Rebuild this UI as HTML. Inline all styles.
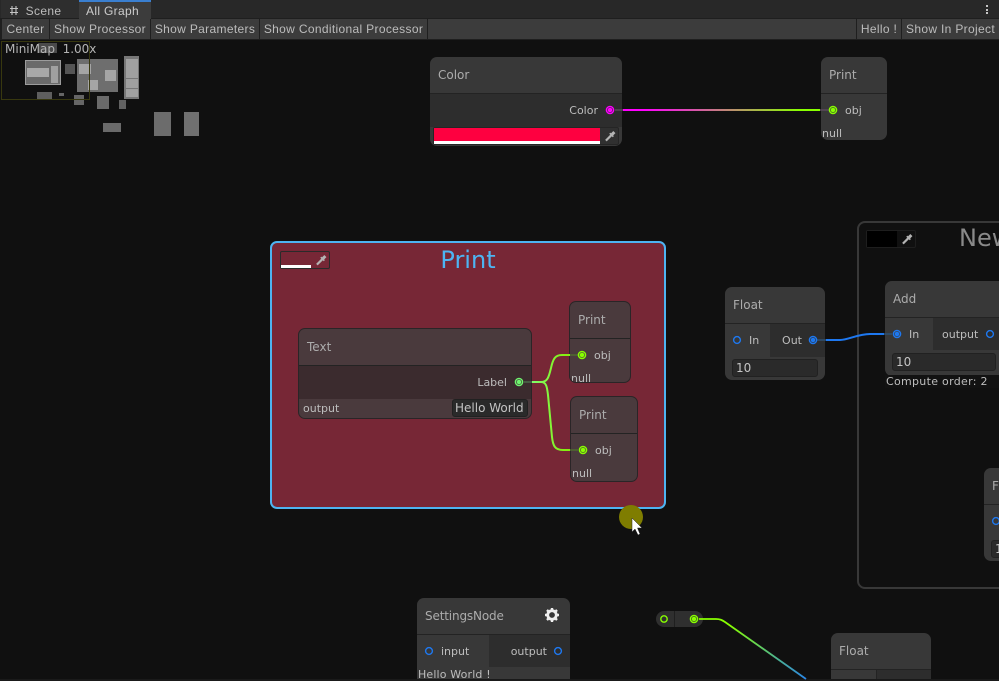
<!DOCTYPE html>
<html><head><meta charset="utf-8"><style>
html,body{margin:0;padding:0;background:#101010}
#r{position:relative;width:999px;height:681px;overflow:hidden;background:#101010;font-family:"DejaVu Sans",sans-serif;font-size:11px;color:#bdbdbd}
#r div{position:absolute;box-sizing:border-box;white-space:nowrap}
.ui{font-family:"Liberation Sans",sans-serif;font-size:12px;letter-spacing:.33px;color:#bcbcbc;line-height:20px;text-align:center}
.btn{top:19px;height:20px;line-height:21px;background:#3c3c3c}
.n{background:#383838;border-radius:7px;overflow:hidden}
.t{font-size:12px;color:#acacac;line-height:14px}
.l{line-height:13px}
.hl{height:1px;background:#232323;left:0;right:0}
.row{background:#2d2d2d;left:0;right:0;height:33px}
.inp{background:#2a2a2a;border:1px solid #212121;border-radius:3px;font-size:12px;line-height:16px;color:#c4c4c4;padding-left:3px}
svg{position:absolute;left:0;top:0}
</style></head><body><div id="r">

<div style="left:0;top:0;width:999px;height:18px;background:#282828"></div>
<div style="left:0;top:18px;width:999px;height:22px;background:#1f1f1f"></div>
<div style="left:1px;top:0;width:78px;height:18px;background:#2e2e2e"></div>
<div class="ui" style="left:25px;top:1px;width:37px;height:18px">Scene</div>
<svg width="30" height="18"><path d="M12 6V15M16 6V15M10 8.500H18M10 12.500H18" stroke="#c4c4c4" stroke-width="1.100" fill="none"/></svg>
<div style="left:79px;top:0;width:72px;height:19px;background:#3c3c3c"></div>
<div style="left:79px;top:0;width:72px;height:2px;background:#3a7fd0"></div>
<div class="ui" style="left:86px;top:1px;height:19px;color:#cccccc">All Graph</div>
<div style="left:986px;top:5px;width:2px;height:2px;background:#c4c4c4"></div>
<div style="left:986px;top:9px;width:2px;height:2px;background:#c4c4c4"></div>
<div style="left:986px;top:12px;width:2px;height:2px;background:#c4c4c4"></div>

<div class="ui btn" style="left:2px;width:47px">Center</div>
<div class="ui btn" style="left:50px;width:100px">Show Processor</div>
<div class="ui btn" style="left:151px;width:108px">Show Parameters</div>
<div class="ui btn" style="left:260px;width:167px">Show Conditional Processor</div>
<div class="btn" style="left:428px;width:428px"></div>
<div class="ui btn" style="left:857px;width:44px">Hello !</div>
<div class="ui btn" style="left:902px;width:97px">Show In Project</div>

<svg width="999" height="681">
 <g>
  <rect x="38" y="43" width="19" height="10" fill="#4a4a4a"/>
  <rect x="25.500" y="60.500" width="35" height="24" fill="#6a6a6a" stroke="#9c9c9c"/>
  <rect x="27" y="68" width="22" height="9" fill="#a8a8a8"/>
  <rect x="51" y="66" width="7" height="17" fill="#a0a0a0"/>
  <rect x="65" y="64" width="10" height="10" fill="#555"/>
  <rect x="77" y="59" width="41" height="33" fill="#6e6e6e"/>
  <rect x="79" y="64" width="12" height="10" fill="#a5a5a5"/>
  <rect x="105" y="70" width="11" height="11" fill="#a5a5a5"/>
  <rect x="88" y="80" width="10" height="10" fill="#a5a5a5"/>
  <rect x="124" y="56" width="15" height="43" fill="#777"/>
  <rect x="126" y="59" width="12" height="19" fill="#a0a0a0"/>
  <rect x="126" y="79" width="12" height="9" fill="#a0a0a0"/>
  <rect x="126" y="89" width="12" height="8" fill="#a0a0a0"/>
  <rect x="37" y="92" width="15" height="8" fill="#5e5e5e"/>
  <rect x="59" y="93" width="5" height="3" fill="#666"/>
  <rect x="74" y="95" width="10" height="10" fill="#666"/>
  <rect x="97" y="96" width="12" height="13" fill="#6a6a6a"/>
  <rect x="119" y="100" width="7" height="9" fill="#626262"/>
  <rect x="103" y="123" width="18" height="9" fill="#6a6a6a"/>
  <rect x="154" y="112" width="17" height="24" fill="#6c6c6c"/>
  <rect x="184" y="112" width="15" height="24" fill="#707070"/>
 </g>
 <rect x="1.500" y="41.500" width="88" height="58" fill="none" stroke="#38380f"/>
</svg>
<div class="l" style="left:5px;top:43px;font-size:12px;color:#b4b4b4">MiniMap&nbsp; 1.00x</div>

<!-- Color node -->
<div class="n" style="left:430px;top:57px;width:192px;height:89px">
 <div class="t" style="left:8px;top:11px">Color</div>
 <div class="hl" style="top:36px"></div>
 <div class="row" style="top:37px"></div>
 <div class="l" style="right:24px;top:47px">Color</div>
 <div style="left:3px;top:70px;width:186px;height:18px;background:#303030;border:1px solid #252525;border-radius:2px"></div>
 <div style="left:4px;top:71px;width:166px;height:16px;background:#fe0040"></div>
 <div style="left:4px;top:84px;width:166px;height:3px;background:#fff"></div>
</div>

<!-- Print top -->
<div class="n" style="left:821px;top:57px;width:66px;height:83px">
 <div class="t" style="left:8px;top:11px">Print</div>
 <div class="hl" style="top:36px"></div>
 <div class="l" style="left:24px;top:47px">obj</div>
 <div class="l" style="left:1px;top:70px">null</div>
</div>

<!-- Group -->
<div style="left:270px;top:241px;width:396px;height:268px;background:#772736;border:2px solid #4db4f2;border-radius:7px"></div>
<div style="left:280px;top:251px;width:50px;height:18px;border:1px solid #2a2a2a;border-radius:2px"></div>
<div style="left:281px;top:265px;width:30px;height:3px;background:#fff"></div>
<div style="left:268px;top:246px;width:400px;text-align:center;font-size:24px;line-height:28px;color:#4db4f2">Print</div>

<!-- Text node -->
<div class="n" style="left:298px;top:328px;width:234px;height:91px;background:#4a3a3d;border:1px solid #2a2527">
 <div class="t" style="left:8px;top:11px">Text</div>
 <div class="hl" style="top:36px"></div>
 <div class="row" style="top:37px;background:#3b2b2e"></div>
 <div class="l" style="right:24px;top:47px">Label</div>
 <div class="l" style="left:4px;top:73px">output</div>
 <div class="inp" style="left:153px;top:70px;width:76px;height:18px;line-height:17px;padding-left:2px">Hello World</div>
</div>

<!-- Print 1 -->
<div class="n" style="left:569px;top:301px;width:62px;height:82px;background:#4a3a3d;border:1px solid #2a2527">
 <div class="t" style="left:8px;top:11px">Print</div>
 <div class="hl" style="top:36px"></div>
 <div class="l" style="left:24px;top:47px">obj</div>
 <div class="l" style="left:1px;top:70px">null</div>
</div>
<!-- Print 2 -->
<div class="n" style="left:570px;top:396px;width:68px;height:86px;background:#4a3a3d;border:1px solid #2a2527">
 <div class="t" style="left:8px;top:11px">Print</div>
 <div class="hl" style="top:36px"></div>
 <div class="l" style="left:24px;top:47px">obj</div>
 <div class="l" style="left:1px;top:70px">null</div>
</div>

<!-- Float -->
<div class="n" style="left:725px;top:287px;width:100px;height:93px">
 <div class="t" style="left:8px;top:11px">Float</div>
 <div class="hl" style="top:36px"></div>
 <div style="left:45px;top:37px;width:55px;height:33px;background:#2d2d2d"></div>
 <div class="l" style="left:24px;top:47px">In</div>
 <div class="l" style="right:23px;top:47px">Out</div>
 <div class="inp" style="left:7px;top:72px;width:86px;height:18px">10</div>
</div>

<!-- New group frame -->
<div style="left:857px;top:221px;width:170px;height:368px;border:2px solid #383838;border-radius:8px"></div>
<div style="left:866px;top:230px;width:50px;height:18px;border:1px solid #1e1e1e;border-radius:2px"></div>
<div style="left:867px;top:231px;width:30px;height:16px;background:#000"></div>
<div style="left:959px;top:224px;font-size:24px;line-height:28px;color:#8a8a8a">New</div>

<!-- Add -->
<div class="n" style="left:885px;top:281px;width:130px;height:95px;border-radius:7px 0 0 7px">
 <div class="t" style="left:8px;top:11px">Add</div>
 <div class="hl" style="top:36px"></div>
 <div style="left:48px;top:37px;width:82px;height:32px;background:#2d2d2d"></div>
 <div class="l" style="left:24px;top:47px">In</div>
 <div class="l" style="left:57px;top:47px">output</div>
 <div class="inp" style="left:7px;top:72px;width:104px;height:18px">10</div>
</div>
<div style="left:885px;top:375px;width:114px;height:13px;background:#121212"></div>
<div class="l" style="left:886px;top:375px;letter-spacing:.3px">Compute order: 2</div>

<!-- F -->
<div class="n" style="left:984px;top:468px;width:40px;height:93px">
 <div class="t" style="left:8px;top:11px">Float</div>
 <div class="hl" style="top:36px"></div>
 <div class="inp" style="left:7px;top:72px;width:40px;height:18px">10</div>
</div>

<!-- SettingsNode -->
<div class="n" style="left:417px;top:598px;width:153px;height:90px">
 <div class="t" style="left:8px;top:11px;letter-spacing:-.15px">SettingsNode</div>
 <div class="hl" style="top:36px"></div>
 <div style="left:72px;top:37px;width:81px;height:32px;background:#2d2d2d"></div>
 <div class="l" style="left:24px;top:47px">input</div>
 <div class="l" style="right:23px;top:47px">output</div>
 <div class="l" style="left:1px;top:70px;letter-spacing:.15px">Hello World !</div>
</div>

<!-- Relay -->
<div style="left:656px;top:611px;width:47px;height:16px;background:#2f2f2f;border-radius:8px"></div>
<div style="left:674px;top:611px;width:1px;height:16px;background:#1f1f1f"></div>

<!-- Float bottom -->
<div class="n" style="left:831px;top:633px;width:100px;height:60px">
 <div class="t" style="left:8px;top:11px">Float</div>
 <div class="hl" style="top:36px"></div>
 <div style="left:45px;top:37px;width:1px;height:30px;background:#232323"></div>
 <div style="left:46px;top:37px;width:54px;height:30px;background:#2d2d2d"></div>
</div>

<div style="left:0;top:679px;width:999px;height:2px;background:#1a1a1a"></div>

<svg width="999" height="681" style="z-index:2">
 <defs>
  <linearGradient id="a" gradientUnits="userSpaceOnUse" x1="623" y1="0" x2="820" y2="0"><stop offset=".1" stop-color="#f0f"/><stop offset=".9" stop-color="#8f0"/></linearGradient>
  <linearGradient id="b" gradientUnits="userSpaceOnUse" x1="720" y1="620" x2="806" y2="679"><stop offset=".1" stop-color="#8f0"/><stop offset="1" stop-color="#2a86e8"/></linearGradient>
  <linearGradient id="c" gradientUnits="userSpaceOnUse" x1="530" y1="0" x2="565" y2="0"><stop offset="0" stop-color="#80ff70"/><stop offset="1" stop-color="#85ee10"/></linearGradient>
 </defs>
 <path d="M623 110H820" stroke="url(#a)" stroke-width="2" fill="none"/>
 <path d="M615 110H623M820 110H829" stroke="#5a4a5a" stroke-width="1.400" fill="none"/>
 <path d="M532 382H541C548 382 549 376 551 368C553 359 555 355 562 355H570" stroke="url(#c)" stroke-width="2" fill="none"/>
 <path d="M532 382H541C546 382 547 386 548 395L552 437C553 446 555 450 563 450H570" stroke="url(#c)" stroke-width="2" fill="none"/>
 <path d="M524 382H532" stroke="#4a6a4a" stroke-width="1.500" fill="none"/>
 <path d="M570 355H578M570 450H578" stroke="#4f6a30" stroke-width="1.500" fill="none"/>
 <path d="M826 340H840C848 340 858 334 870 334H884" stroke="#1e78f0" stroke-width="2" fill="none"/>
 <path d="M817 340H826M884 334H892" stroke="#2f5070" stroke-width="1.500" fill="none"/>
 <path d="M699 619H716C720 619 722 620 725 622L806 679" stroke="url(#b)" stroke-width="1.800" fill="none"/>

 <g fill="none" stroke-width="1.400">
  <g stroke="#f0f"><circle cx="610" cy="110" r="3.600"/><circle cx="610" cy="110" r="1.600" fill="#f0f"/></g>
  <g stroke="#8f0">
   <circle cx="833" cy="110" r="3.600"/><circle cx="833" cy="110" r="1.600" fill="#8f0"/>
   <circle cx="582" cy="355" r="3.600"/><circle cx="582" cy="355" r="1.600" fill="#8f0"/>
   <circle cx="583" cy="450" r="3.600"/><circle cx="583" cy="450" r="1.600" fill="#8f0"/>
   <circle cx="664" cy="619" r="3.200"/>
   <circle cx="694" cy="619" r="3.600"/><circle cx="694" cy="619" r="1.600" fill="#8f0"/>
  </g>
  <g stroke="#70f570"><circle cx="519" cy="382" r="3.600"/><circle cx="519" cy="382" r="1.600" fill="#70f570"/></g>
  <g stroke="#1e78f0">
   <circle cx="737" cy="340" r="3.400"/>
   <circle cx="813" cy="340" r="3.600"/><circle cx="813" cy="340" r="1.600" fill="#1e78f0"/>
   <circle cx="897" cy="334" r="3.600"/><circle cx="897" cy="334" r="1.600" fill="#1e78f0"/>
   <circle cx="990" cy="334" r="3.400"/>
   <circle cx="996" cy="521" r="3.400"/>
   <circle cx="429" cy="651" r="3.400"/>
   <circle cx="558" cy="651" r="3.400"/>
  </g>
 </g>

 <!-- eyedroppers -->
 <g stroke="#b4b4b4" fill="#b4b4b4">
  <g transform="translate(610.500 136) rotate(45)"><path id="d" d="M0 6.500V-1" stroke-width="2.200"/><path d="M-2.500-1.500H2.500" stroke-width="1.500"/><path d="M0-2V-5.500" stroke-width="3"/></g>
  <g transform="translate(321.500 260) rotate(45)"><path d="M0 6.500V-1" stroke-width="2.200"/><path d="M-2.500-1.500H2.500" stroke-width="1.500"/><path d="M0-2V-5.500" stroke-width="3"/></g>
  <g transform="translate(907.500 239) rotate(45)"><path d="M0 6.500V-1" stroke-width="2.200"/><path d="M-2.500-1.500H2.500" stroke-width="1.500"/><path d="M0-2V-5.500" stroke-width="3"/></g>
 </g>

 <!-- gear -->
 <g transform="translate(552 615)">
  <circle r="4.300" fill="none" stroke="#efefef" stroke-width="2.800"/>
  <g stroke="#efefef" stroke-width="2.400">
   <path d="M0-7V-4.500M0 7V4.500M-7 0H-4.500M7 0H4.500M-5-5L-3.200-3.200M5 5L3.200 3.200M-5 5L-3.200 3.200M5-5L3.200-3.200"/>
  </g>
 </g>

 <!-- mouse -->
 <circle cx="631" cy="517" r="12" fill="#7f7d00"/>
 <path d="M632 518V532L635 529L638 535L640 534L637.500 528H642Z" fill="#fff" stroke="#222" stroke-width=".5"/>
</svg>
</div></body></html>
